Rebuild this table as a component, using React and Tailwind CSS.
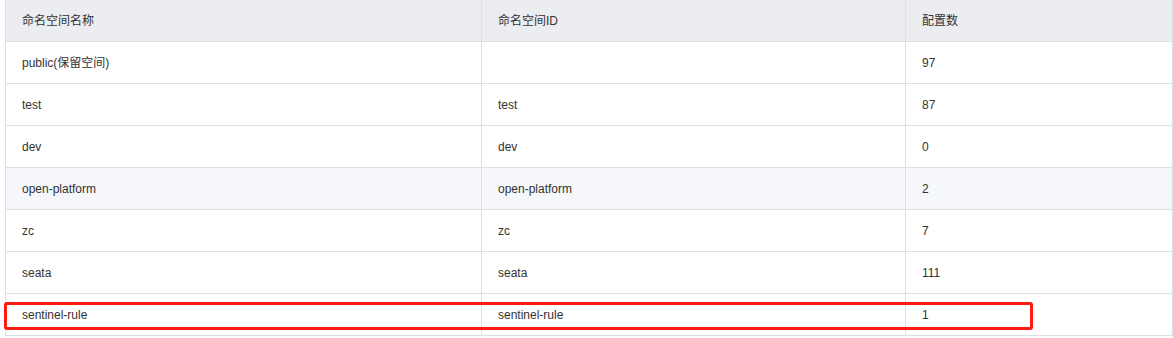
import React from "react";

const rows = [
  { name: "public(保留空间)", id: "", count: "97" },
  { name: "test", id: "test", count: "87" },
  { name: "dev", id: "dev", count: "0" },
  { name: "open-platform", id: "open-platform", count: "2", hover: true },
  { name: "zc", id: "zc", count: "7" },
  { name: "seata", id: "seata", count: "111" },
  { name: "sentinel-rule", id: "sentinel-rule", count: "1" },
];

const font = {
  fontFamily: '"Liberation Sans", "Noto Sans CJK SC", sans-serif',
};

function Cell({ children, last }) {
  return (
    <div
      className={
        "h-[42px] flex items-center pl-4 border-b border-[#dcdfe6] " +
        (last ? "" : "border-r")
      }
    >
      {children}
    </div>
  );
}

function App() {
  return (
    <div
      className="relative w-[1173px] h-[338px] bg-white overflow-hidden text-[12px] text-[#333]"
      style={font}
    >
      <div className="ml-[5px] w-[1168px] border-l border-r border-[#dcdfe6]">
        <div className="grid grid-cols-[476px_424px_1fr] bg-[#ebedf1]">
          <Cell>命名空间名称</Cell>
          <Cell>命名空间ID</Cell>
          <Cell last>配置数</Cell>
        </div>
        {rows.map((r) => (
          <div
            key={r.name}
            className={
              "grid grid-cols-[476px_424px_1fr] " +
              (r.hover ? "bg-[#f5f7fa]" : "bg-white")
            }
          >
            <Cell>{r.name}</Cell>
            <Cell>{r.id}</Cell>
            <Cell last>{r.count}</Cell>
          </div>
        ))}
      </div>
      {/* highlight box */}
      <div className="absolute left-[4px] top-[302px] w-[1029px] h-[28px] border-[3px] border-[#ff1a12] rounded-[3px]" />
    </div>
  );
}

export default App;
